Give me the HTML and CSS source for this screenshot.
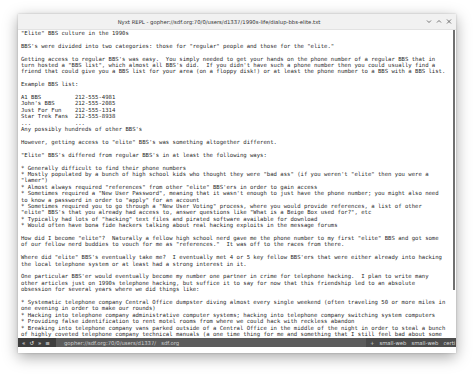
FILE: index.html
```html
<!DOCTYPE html>
<html>
<head>
<meta charset="utf-8">
<link rel="stylesheet" href="styles.css">
</head>
<body>
<div class="desk">
  <div class="window">
    <div class="titlebar">
      <div class="title">Nyxt REPL - gopher://sdf.org:70/0/users/d1337/1990s-life/dialup-bbs-elite.txt</div>
      <div class="controls">
        <svg width="6" height="5" viewBox="0 0 6 5"><path d="M1 1.5 L3 3.5 L5 1.5" fill="none" stroke="#555" stroke-width="0.8"/></svg>
        <svg width="6" height="5" viewBox="0 0 6 5"><path d="M1 3.5 L3 1.5 L5 3.5" fill="none" stroke="#555" stroke-width="0.8"/></svg>
        <svg width="6" height="5" viewBox="0 0 6 5"><path d="M1 0.5 L5 4.5 M5 0.5 L1 4.5" fill="none" stroke="#555" stroke-width="0.8"/></svg>
      </div>
    </div>
    <div class="content">
<pre class="text">"Elite" BBS culture in the 1990s

BBS's were divided into two categories: those for "regular" people and those for the "elite."

Getting access to regular BBS's was easy.  You simply needed to get your hands on the phone number of a regular BBS that in
turn hosted a "BBS list", which almost all BBS's did.  If you didn't have such a phone number then you could usually find a
friend that could give you a BBS list for your area (on a floppy disk!) or at least the phone number to a BBS with a BBS list.

Example BBS list:

A1 BBS          212-555-4981
John's BBS      212-555-2085
Just For Fun    212-555-1314
Star Trek Fans  212-555-8938
...             ...
Any possibly hundreds of other BBS's

However, getting access to "elite" BBS's was something altogether different.

"Elite" BBS's differed from regular BBS's in at least the following ways:

* Generally difficult to find their phone numbers
* Mostly populated by a bunch of high school kids who thought they were "bad ass" (if you weren't "elite" then you were a
"lamer")
* Almost always required "references" from other "elite" BBS'ers in order to gain access
* Sometimes required a "New User Password", meaning that it wasn't enough to just have the phone number; you might also need
to know a password in order to "apply" for an account
* Sometimes required you to go through a "New User Voting" process, where you would provide references, a list of other
"elite" BBS's that you already had access to, answer questions like "What is a Beige Box used for?", etc
* Typically had lots of "hacking" text files and pirated software available for download
* Would often have bona fide hackers talking about real hacking exploits in the message forums

How did I become "elite"?  Naturally a fellow high school nerd gave me the phone number to my first "elite" BBS and got some
of our fellow nerd buddies to vouch for me as "references."  It was off to the races from there.

Where did "elite" BBS's eventually take me?  I eventually met 4 or 5 key fellow BBS'ers that were either already into hacking
the local telephone system or at least had a strong interest in it.

One particular BBS'er would eventually become my number one partner in crime for telephone hacking.  I plan to write many
other articles just on 1990s telephone hacking, but suffice it to say for now that this friendship led to an absolute
obsession for several years where we did things like:

* Systematic telephone company Central Office dumpster diving almost every single weekend (often traveling 50 or more miles in
one evening in order to make our rounds)
* Hacking into telephone company administrative computer systems; hacking into telephone company switching system computers
* Providing false identification to rent motel rooms from where we could hack with reckless abandon
* Breaking into telephone company vans parked outside of a Central Office in the middle of the night in order to steal a bunch
of highly coveted telephone company technical manuals (a one time thing for me and something that I still feel bad about some</pre>
      <div class="scrollbar"><div class="thumb"></div></div>
    </div>
    <div class="status">
      <div class="nav"><span>«</span><span>↺</span><span>»</span><span>≡</span></div>
      <div class="url"><span>gopher://sdf.org:70/0/users/d1337/</span><span class="host">sdf.org</span></div>
      <div class="modes"><span>+</span><span>small-web</span><span>small-web</span><span>certi</span></div>
    </div>
    <div class="minibuffer"></div>
  </div>
</div>
</body>
</html>
```
FILE: styles.css
```css
html, body {
  margin: 0;
  padding: 0;
  background: #ffffff;
}

.desk {
  padding: 14px 18px;
  width: 474px;
  height: 376px;
  box-sizing: border-box;
  overflow: hidden;
}

.window {
  width: 438px;
  display: flex;
  flex-direction: column;
  background: #ffffff;
  box-shadow: 0 4px 14px rgba(0, 0, 0, 0.35), 0 0 2px rgba(0, 0, 0, 0.2);
}

.titlebar {
  height: 16px;
  background: #f1f1f1;
  border-bottom: 1px solid #e2e2e2;
  box-sizing: border-box;
  display: flex;
  align-items: center;
}

.title {
  flex: 1;
  text-align: center;
  font-family: "DejaVu Sans", sans-serif;
  font-size: 5.3px;
  color: #333333;
  white-space: nowrap;
  overflow: hidden;
}

.controls {
  display: flex;
  gap: 4px;
  padding-right: 4px;
  padding-left: 6px;
  align-items: center;
}

.controls svg {
  display: block;
}

.content {
  height: 308px;
  display: flex;
  overflow: hidden;
}

.text {
  flex: 1;
  margin: 0;
  padding: 0 0 0 3px;
  font-family: "DejaVu Sans Mono", monospace;
  font-size: 5.6px;
  line-height: 6.4px;
  color: #2a2a2a;
  white-space: pre;
  overflow: hidden;
}

.scrollbar {
  width: 5px;
  display: flex;
  justify-content: center;
}

.thumb {
  width: 2px;
  height: 260px;
  background: #707070;
}

.status {
  height: 9px;
  display: flex;
  align-items: stretch;
  background: #5c5c5c;
  font-family: "DejaVu Sans", sans-serif;
  font-size: 5.3px;
  color: #d8d8d8;
  white-space: nowrap;
  overflow: hidden;
}

.nav {
  display: flex;
  align-items: center;
  gap: 4px;
  padding: 0 6px 0 4px;
  background: #3e3e3e;
  color: #e8e8e8;
  font-size: 5.5px;
}

.url {
  flex: 1;
  display: flex;
  align-items: center;
  gap: 5px;
  padding-left: 8px;
  color: #cfcfcf;
  overflow: hidden;
}

.modes {
  display: flex;
  align-items: center;
  gap: 5px;
  padding-left: 4px;
  width: 90px;
  box-sizing: border-box;
  background: #4c4c4c;
  color: #dddddd;
  overflow: hidden;
}

.minibuffer {
  height: 6px;
  background: #ffffff;
}
```
